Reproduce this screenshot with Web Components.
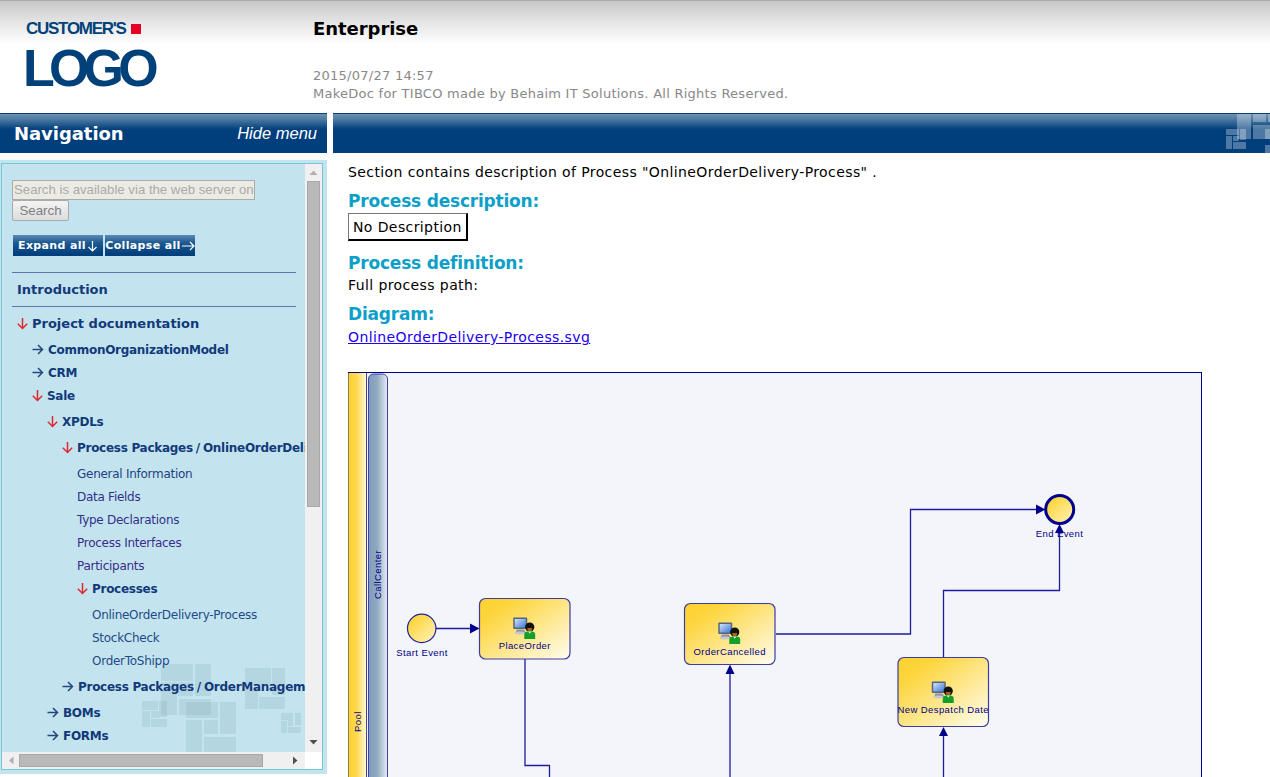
<!DOCTYPE html>
<html>
<head>
<meta charset="utf-8">
<title>MakeDoc</title>
<style>
  html,body{margin:0;padding:0;height:100%;overflow:hidden;background:#fff;font-family:"DejaVu Sans",Verdana,sans-serif}
</style>
</head>
<body>
<app-shell>
  <doc-header slot="header" title="Enterprise" date="2015/07/27 14:57" note="MakeDoc for TIBCO made by Behaim IT Solutions. All Rights Reserved."></doc-header>
  <nav-panel slot="nav">
    <tree-node label="Project documentation" state="open" top>
      <tree-node label="CommonOrganizationModel" state="closed"></tree-node>
      <tree-node label="CRM" state="closed"></tree-node>
      <tree-node label="Sale" state="open">
        <tree-node label="XPDLs" state="open">
          <tree-node label="Process Packages/OnlineOrderDelivery" state="open">
            <tree-node label="General Information" color="#1f3f7f"></tree-node>
            <tree-node label="Data Fields" color="#33308a"></tree-node>
            <tree-node label="Type Declarations" color="#33308a"></tree-node>
            <tree-node label="Process Interfaces" color="#3a2c8a"></tree-node>
            <tree-node label="Participants" color="#3a2c8a"></tree-node>
            <tree-node label="Processes" state="open">
              <tree-node label="OnlineOrderDelivery-Process" color="#1f4a88"></tree-node>
              <tree-node label="StockCheck" color="#1f4a88"></tree-node>
              <tree-node label="OrderToShipp" color="#1f4a88"></tree-node>
            </tree-node>
          </tree-node>
          <tree-node label="Process Packages/OrderManagement" state="closed"></tree-node>
        </tree-node>
        <tree-node label="BOMs" state="closed"></tree-node>
        <tree-node label="FORMs" state="closed"></tree-node>
      </tree-node>
    </tree-node>
  </nav-panel>
  <doc-content slot="main"></doc-content>
</app-shell>

<script>
// shared watermark squares, same shape repeats in the bar and in the menu
function squares(list){
  return list.map(r => `<rect x="${r[0]}" y="${r[1]}" width="${r[2]}" height="${r[3]}"/>`).join('');
}

class AppShell extends HTMLElement {
  connectedCallback() {
    this.attachShadow({ mode: 'open' });
    this.shadowRoot.innerHTML = `
      <style>
        :host{display:flex;flex-direction:column;height:777px;overflow:hidden}
        .row{display:flex;gap:6px;flex:1;min-height:0}
        .left{width:327px;flex:none;display:flex;flex-direction:column}
        .right{flex:1;min-width:0;display:flex;flex-direction:column}
      </style>
      <slot name="header"></slot>
      <div class="row">
        <div class="left"><blue-bar heading="Navigation" action="Hide menu"></blue-bar><slot name="nav"></slot></div>
        <div class="right"><blue-bar deco></blue-bar><slot name="main"></slot></div>
      </div>`;
  }
}
customElements.define('app-shell', AppShell);

class DocHeader extends HTMLElement {
  connectedCallback() {
    this.attachShadow({ mode: 'open' });
    this.shadowRoot.innerHTML = `
      <style>
        :host{display:flex;height:113px;box-sizing:border-box;border-top:1px solid #aaa;
          background:linear-gradient(#c8c8c8 0,#e6e6e6 22px,#fff 44px)}
        .logo{width:313px;flex:none;box-sizing:border-box;padding:17px 0 0 25px;color:#00417a;font-family:"Liberation Sans",Arial,sans-serif;font-weight:700}
        .top{display:flex;align-items:center;height:21px;line-height:21px;font-size:17px;letter-spacing:-1.27px;white-space:nowrap;padding-left:1px}
        .top i{display:block;width:10px;height:10px;background:#e60026;margin-left:5px}
        .big{font-size:52px;line-height:52px;letter-spacing:-5.8px;height:52px;margin-top:3px;margin-left:-2px}
        .txt{flex:1;min-width:0}
        h1{margin:0;font-size:18px;line-height:24px;padding-top:16px;color:#000;font-weight:700;letter-spacing:-.05px}
        .small{margin-top:26px;color:#888;font-size:13px;line-height:18px;letter-spacing:.26px;white-space:nowrap}
      </style>
      <div class="logo">
        <div class="top">CUSTOMER'S<i></i></div>
        <div class="big">LOGO</div>
      </div>
      <div class="txt">
        <h1>${this.getAttribute('title')}</h1>
        <div class="small">${this.getAttribute('date')}<br>${this.getAttribute('note')}</div>
      </div>`;
  }
}
customElements.define('doc-header', DocHeader);

class BlueBar extends HTMLElement {
  connectedCallback() {
    this.attachShadow({ mode: 'open' });
    const heading = this.getAttribute('heading');
    const action = this.getAttribute('action');
    this.shadowRoot.innerHTML = `
      <style>
        :host{display:flex;flex:none;height:40px;box-sizing:border-box;position:relative;overflow:hidden;
          align-items:center;justify-content:space-between;padding:0 10px 0 14px;color:#fff;border-top:1px solid #0b3f75;
          background:linear-gradient(#6d90b2 0,#4f7ba3 5px,#0b4680 14px,#003e7c 16px)}
        b{font-size:18px;font-weight:700;letter-spacing:-.05px}
        i{font-family:"Liberation Sans",Arial,sans-serif;font-size:16.5px}
        svg{position:absolute;right:0;top:0;width:45px;height:39px;fill:#fff}
      </style>
      ${heading ? `<b>${heading}</b>` : ''}
      ${action ? `<i>${action}</i>` : ''}
      ${this.hasAttribute('deco') ? `<svg viewBox="1225 114 45 39">
        <g fill-opacity=".3">${squares([[1237,113,14,26],[1253,113,13,9],[1268,113,3,9],[1253,125,18,14],[1226,129,13,6],[1226,136,6,13],[1233,142,13,7],[1233,136,6,5],[1240,129,6,11]])}</g>
        <g fill-opacity=".3">${squares([[1265,129,6,10],[1265,145,6,8]])}</g></svg>` : ''}`;
  }
}
customElements.define('blue-bar', BlueBar);

class NavPanel extends HTMLElement {
  connectedCallback() {
    this.attachShadow({ mode: 'open' });
    const wm = [
      [161,664,32,17],[195,664,16,32],[161,682,16,33],[178,682,15,14],[179,699,32,16],
      [245,668,26,17],[272,668,13,27],[245,687,13,22],[259,697,26,12],
      [142,701,16,9],[159,701,8,16],[142,711,8,16],[151,711,8,7],[151,719,16,8],
      [186,702,32,16],[220,702,16,32],[186,720,16,33],[204,720,14,14],[204,737,32,16],
      [281,713,12,7],[295,713,6,12],[281,721,6,12],[288,720,5,6],[288,727,13,6]
    ];
    this.shadowRoot.innerHTML = `
      <style>
        :host{display:block;flex:none;box-sizing:border-box;height:614px;margin-top:7px;padding:3px 4px 4px 1px;background:#c3e4ef}
        .box{height:100%;box-sizing:border-box;border:1px solid #79c5d8;display:grid;grid-template:1fr 17px/1fr 17px;background:#c3e4ef}
        .view{position:relative;overflow:hidden;min-width:0;min-height:0;padding:16px 0 0 10px;box-sizing:border-box}
        .wm{position:absolute;left:-2px;top:-164px;width:306px;height:753px;fill:#7fa3ad;fill-opacity:.22;pointer-events:none}
        .inner{position:relative;width:284px}
        input{display:block;box-sizing:border-box;width:243px;height:20px;margin:0;padding:0 0 1px 1px;border:1px solid #aaa;background:#ebebe4;
          font:13.2px "Liberation Sans",Arial,sans-serif}
        input::placeholder{color:#aaa;opacity:1}
        .go{display:block;box-sizing:border-box;width:57px;height:21px;margin:0;padding:0;border:1px solid #aaa;border-radius:2px;color:#808080;
          background:linear-gradient(#f4f4f4,#dcdcdc);font:13.33px "Liberation Sans",Arial,sans-serif}
        .btns{display:flex;gap:2px;margin:14px 0 16px 1px}
        .btns span{display:flex;align-items:center;justify-content:center;gap:1px;width:90px;height:21px;color:#fff;font-size:11px;font-weight:700;letter-spacing:.35px;
          background:linear-gradient(#5d8bb3 0,#1b5890 8px,#003e7c 20px);white-space:nowrap}
        .intro{border:solid #5a78b0;border-width:1px 0;height:33px;line-height:33px;padding-left:5px;color:#12397a;font-size:13px;font-weight:700;margin-bottom:5px;box-sizing:content-box}
        .tree{margin-left:5px;white-space:nowrap}
        .track{background:#f0f0f0;position:relative}
        .v::before{content:"";position:absolute;left:2px;right:2px;top:17px;height:326px;background:#b9b9b9;border:1px solid #a8a8a8;box-sizing:border-box}
        .h::before{content:"";position:absolute;top:2px;bottom:2px;left:17px;width:244px;background:#b9b9b9;border:1px solid #a8a8a8;box-sizing:border-box}
        .track svg{position:absolute}
        .corner{background:#fff}
      </style>
      <div class="box">
        <div class="view">
          <svg class="wm" viewBox="0 0 306 753">${squares(wm)}</svg>
          <div class="inner">
            <input placeholder="Search is available via the web server on" disabled>
            <button class="go" disabled>Search</button>
            <div class="btns">
              <span>Expand all<svg width="11" height="12" viewBox="0 0 11 12"><path d="M5.5 1V11M1.5 7L5.5 11L9.5 7" fill="none" stroke="#fff" stroke-width="1.2"/></svg></span>
              <span>Collapse all<svg width="13" height="10" viewBox="0 0 13 10"><path d="M0 5H12M8 1L12 5L8 9" fill="none" stroke="#fff" stroke-width="1.2"/></svg></span>
            </div>
            <div class="intro">Introduction</div>
            <div class="tree"><slot></slot></div>
          </div>
        </div>
        <div class="track v">
          <svg style="left:4px;top:6px" width="9" height="6"><path d="M4.5 0.5L8.5 5H0.5z" fill="#b0b0b0"/></svg>
          <svg style="left:4px;bottom:7px" width="9" height="6"><path d="M0.5 1H8.5L4.5 5.5z" fill="#505050"/></svg>
        </div>
        <div class="track h">
          <svg style="left:6px;top:4px" width="6" height="9"><path d="M5.5 .5V8.5L1 4.5z" fill="#b0b0b0"/></svg>
          <svg style="right:7px;top:4px" width="6" height="9"><path d="M1 .5V8.5L5.5 4.5z" fill="#505050"/></svg>
        </div>
        <div class="corner"></div>
      </div>`;
  }
}
customElements.define('nav-panel', NavPanel);

class TreeNode extends HTMLElement {
  connectedCallback() {
    this.attachShadow({ mode: 'open' });
    const state = this.getAttribute('state');
    const color = this.getAttribute('color') || '#12397a';
    const top = this.hasAttribute('top');
    let arrow = '';
    if (state === 'open') {
      arrow = `<svg width="15" height="23" viewBox="0 0 15 23"><path d="M5.5 6V16.5M.8 11.8L5.5 16.5L10.2 11.8" fill="none" stroke="#e0282e" stroke-width="1.5"/></svg>`;
    } else if (state === 'closed') {
      arrow = `<svg width="16" height="23" viewBox="0 0 16 23"><path d="M.5 11.5H10.5M6 7L10.5 11.5L6 16" fill="none" stroke="#24487e" stroke-width="1.5"/></svg>`;
    }
    // the slash sits wider in the reference font
    const label = this.getAttribute('label').replace('/', '<span class="sl">/</span>');
    // margins on .kids collapse through the nesting, so a deep branch ends with one 3px gap
    this.shadowRoot.innerHTML = `
      <style>
        :host{display:block}
        .row{display:flex;align-items:center;height:23px;color:${color};font-size:${top ? 13 : 12}px;letter-spacing:${top ? 0 : state ? -.28 : -.27}px;font-weight:${state ? 700 : 400}}
        .sl{margin:0 3px}
        .kids{margin:3px 0;padding-left:15px}
        .kids.none{display:none}
        svg{flex:none}
      </style>
      <div class="row">${arrow}<span>${label}</span></div>
      <div class="kids ${this.children.length ? '' : 'none'}"><slot></slot></div>`;
  }
}
customElements.define('tree-node', TreeNode);

class DocContent extends HTMLElement {
  connectedCallback() {
    this.attachShadow({ mode: 'open' });
    this.shadowRoot.innerHTML = `
      <style>
        :host{display:block;padding:10px 0 0 15px;font-size:14px;letter-spacing:.4px;color:#000;line-height:18px}
        p{margin:0;white-space:nowrap}
        h2{margin:0;font-size:17px;line-height:22px;font-weight:700;color:#0c9fc9;letter-spacing:-.2px}
        .none{display:block;width:max-content;box-sizing:border-box;height:28px;line-height:27px;padding:0 4px;border:solid;border-width:1px 2px 2px 1px;border-color:#777 #000 #000 #777;margin-top:1px}
        a{color:#2200ee;text-decoration:underline}
        process-diagram{margin-top:26px}
      </style>
      <p>Section contains description of Process "OnlineOrderDelivery-Process" .</p>
      <h2 style="margin-top:9px">Process description:</h2>
      <div class="none">No Description</div>
      <h2 style="margin-top:11px">Process definition:</h2>
      <p style="margin-top:2px">Full process path:</p>
      <h2 style="margin-top:9px">Diagram:</h2>
      <p style="margin-top:3px"><a href="#">OnlineOrderDelivery-Process.svg</a></p>
      <process-diagram></process-diagram>`;
  }
}
customElements.define('doc-content', DocContent);

class ProcessDiagram extends HTMLElement {
  // places a task box with its user icon; x,y are page numbers minus the origin
  task(x, y, w, h, label) {
    const cx = x + w / 2;
    return `<rect x="${x}" y="${y}" width="${w}" height="${h}" rx="6" fill="url(#task)" stroke="#3c3ca6" stroke-width="1.2"/>
      <use href="#user" x="${cx - 13}" y="${y + 18 + (h > 65 ? 5 : 0)}"/>
      <text x="${cx}" y="${y + h - 10 + (h > 65 ? -4 : 0)}" class="t">${label}</text>`;
  }
  connectedCallback() {
    this.attachShadow({ mode: 'open' });
    // origin of the drawing is page (348,372)
    const ox = 348, oy = 372;
    const P = (x, y) => `${x - ox} ${y - oy}`;
    const line = pts => `<path d="M${pts.map(p => P(p[0], p[1])).join('L')}" fill="none" stroke="#1c1c9c" stroke-width="1.3"/>`;
    const head = (tip, a, b) => `<path d="M${P(tip[0], tip[1])}L${P(a[0], a[1])}L${P(b[0], b[1])}z" fill="#00008b"/>`;
    this.shadowRoot.innerHTML = `
      <style>
        :host{display:block;width:854px;height:420px}
        svg{display:block;overflow:hidden}
        text{font:9.5px "Liberation Sans",Arial,sans-serif;fill:#000088;letter-spacing:.42px}
        .t{text-anchor:middle}
      </style>
      <svg width="854" height="420" viewBox="0 0 854 420">
        <defs>
          <linearGradient id="pool"><stop offset="0" stop-color="#fdd22e"/><stop offset=".45" stop-color="#fed94f"/><stop offset="1" stop-color="#fff8d2"/></linearGradient>
          <linearGradient id="lane"><stop offset="0" stop-color="#7f9db9"/><stop offset=".45" stop-color="#8faac1"/><stop offset="1" stop-color="#e8eef2"/></linearGradient>
          <linearGradient id="task" x1="0" y1="0" x2="1" y2="1"><stop offset="0" stop-color="#fdd22e"/><stop offset=".2" stop-color="#fdd53c"/><stop offset="1" stop-color="#fffdf0"/></linearGradient>
          <linearGradient id="evt" x1="0" y1="0" x2="1" y2="1"><stop offset=".1" stop-color="#fdd22e"/><stop offset="1" stop-color="#fff4c0"/></linearGradient>
          <linearGradient id="scr" x1="0" y1="0" x2="1" y2="1"><stop offset="0" stop-color="#cfe2fb"/><stop offset="1" stop-color="#3f78d8"/></linearGradient>
          <symbol id="user" width="24" height="24" viewBox="0 0 24 24">
            <rect x="1.5" y="1" width="14" height="11.5" rx="1" fill="#5a6478"/>
            <rect x="3" y="2.5" width="11" height="8.5" fill="url(#scr)"/>
            <path d="M5 13h7l2.5 3.5h-9l-2 1z" fill="#8d93a3"/>
            <ellipse cx="8" cy="16.5" rx="5" ry="1.4" fill="#c4c8d2"/>
            <circle cx="18" cy="10.5" r="4.6" fill="#111"/>
            <path d="M15.5 11.5h5l-.6 3h-3.8z" fill="#a4641c"/>
            <path d="M12.5 22.5V18c0-2 2-3.2 5.5-3.2s5.5 1.2 5.5 3.2v4.5z" fill="#14a028"/>
            <path d="M16.5 15l1.5 2.2 1.5-2.2z" fill="#e8f6e8"/>
          </symbol>
        </defs>
        <rect x="0.5" y="0.5" width="853" height="440" fill="#f3f5fa" stroke="#00008b"/>
        <rect x="1" y="1" width="17" height="430" fill="url(#pool)"/>
        <path d="M.5 1V420" stroke="#8a7a60"/>
        <path d="M18.5 1V420" stroke="#4040a8"/>
        <path d="M20.5 420V7a5 5 0 0 1 5-5h9a5 5 0 0 1 5 5V420z" fill="url(#lane)" stroke="#4040a8"/>
        <text transform="translate(13,360) rotate(-90)">Pool</text>
        <text transform="translate(33,227) rotate(-90)">CallCenter</text>

        ${line([[436, 628.5], [478, 628.5]])}
        ${head([479.5, 628.5], [470, 623.5], [470, 633.5])}
        ${line([[525, 659], [525, 765.5], [549.5, 765.5], [549.5, 777]])}
        ${line([[730, 777], [730, 670]])}
        ${head([730, 664.5], [725.5, 674], [734.5, 674])}
        ${line([[776, 634], [910.5, 634], [910.5, 509.5], [1040, 509.5]])}
        ${head([1045.5, 509.5], [1036, 504.5], [1036, 514.5])}
        ${line([[943.5, 657], [943.5, 590.5], [1059.5, 590.5], [1059.5, 530]])}
        ${line([[943.5, 777], [943.5, 733]])}
        ${head([943.5, 727], [939, 736], [948, 736])}

        <circle cx="${421.7 - ox}" cy="${628.4 - oy}" r="14.2" fill="url(#evt)" stroke="#2020a0" stroke-width="1.2"/>
        <text class="t" x="${422 - ox}" y="${656 - oy}">Start Event</text>
        <circle cx="${1059.7 - ox}" cy="${509.5 - oy}" r="14" fill="url(#evt)" stroke="#000090" stroke-width="3"/>
        <text class="t" x="${1059.5 - ox}" y="${537 - oy}">End Event</text>
        ${head([1059.5, 524], [1055, 533], [1064, 533])}

        ${this.task(479.5 - ox, 598.5 - oy, 90.5, 60.5, 'PlaceOrder')}
        ${this.task(684.5 - ox, 603.5 - oy, 90.5, 61, 'OrderCancelled')}
        ${this.task(898 - ox, 657.5 - oy, 90.5, 69, 'New Despatch Date')}
      </svg>`;
  }
}
customElements.define('process-diagram', ProcessDiagram);
</script>
</body>
</html>
